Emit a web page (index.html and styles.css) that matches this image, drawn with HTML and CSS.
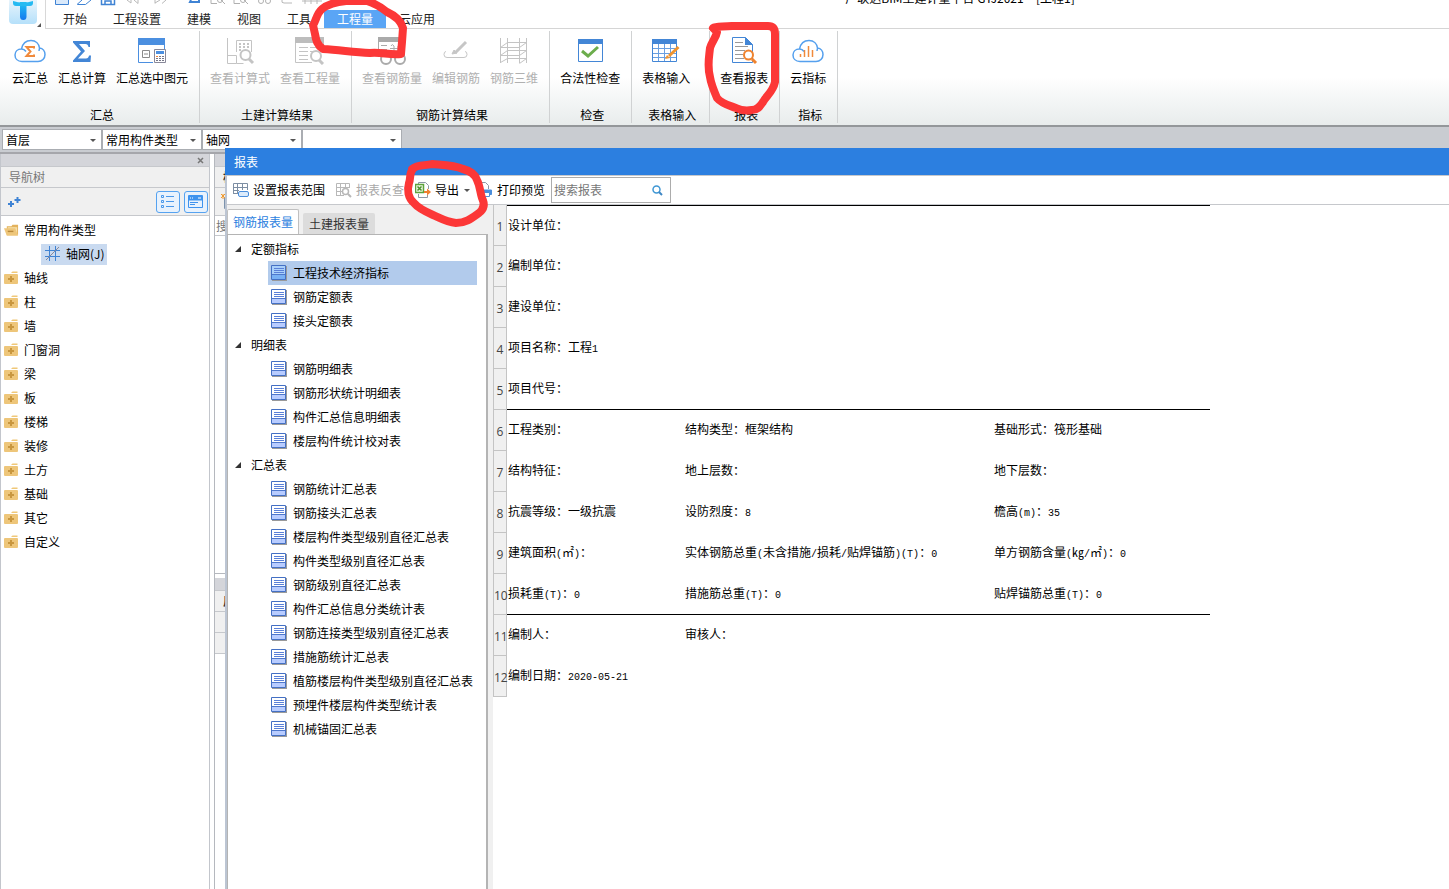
FILE: index.html
```
<!DOCTYPE html>
<html lang="zh-CN">
<head>
<meta charset="utf-8">
<title>广联达BIM土建计量平台 GTJ2021 - [工程1]</title>
<link rel="stylesheet" href="styles.css">
</head>
<body>
<svg class="defs" aria-hidden="true">
  <symbol id="doc" viewBox="0 0 16 16">
    <path d="M1 1h15v15H1z" fill="#9a9a9a"/>
    <path class="paper" d="M.5.5h14v14H.5z" stroke="#4470c4"/>
    <path class="foot" d="M1 10h13v4H1z"/>
    <path d="M3 3.500h10M3 5.500h10M3 7.500h10" stroke="#5a80d8"/>
    <path d="M1 9.500h13" stroke="#4f78cc"/>
  </symbol>
  <symbol id="folder" viewBox="0 0 15 14">
    <path d="M7 2 8.500.5h5V2z" fill="#f0c878"/>
    <rect y="3" width="14" height="10" rx="1" fill="#eec67a"/>
    <path d="M7 5v6M4 8h6" stroke="#c9973f" stroke-width="2"/>
  </symbol>
  <symbol id="folder-open" viewBox="0 0 16 14">
    <path d="M3 3h5l1-1.500h6V12H3z" fill="#e3b25c"/>
    <path d="M4 4h10v7H4z" fill="#f6dfa8"/>
    <path d="M0 5h12l3 8H3z" fill="#eec67a"/>
    <path d="M4 8.500h6" stroke="#b98a3c" stroke-width="1.500"/>
  </symbol>
  <symbol id="cloud" viewBox="0 0 32 24">
    <path d="M8 22.500C3.500 22.500 1 19.500 1 16c0-3.500 2.500-6 6.500-6C8.500 5 12 1.500 17 1.500c5 0 8 3.500 8.500 7.500 3.500.5 5.500 3.500 5.500 6.500 0 4-3 7-7 7zM7.500 10c2 0 3.500 1 4.500 2.500M25.500 9l-.5 3" fill="none" stroke="#55a0ee" stroke-width="1.500"/>
  </symbol>
</svg>

<header class="top">
  <button class="logo" aria-label="主菜单">
    <svg width="28" height="24" viewBox="0 0 28 24"><defs><linearGradient id="lg" x2="0" y2="1"><stop stop-color="#e8f4fc"/><stop offset="1" stop-color="#b5e0fa"/></linearGradient><linearGradient id="tg" x2="0" y2="1"><stop stop-color="#20c4f4"/><stop offset="1" stop-color="#1478ee"/></linearGradient></defs><path d="M0 0h28v20q0 4-4 4H4q-4 0-4-4z" fill="url(#lg)"/><path d="M11 2h6.500v14.500q0 3.500-3.200 3.500T11 16.500z" fill="url(#tg)"/><path d="M4 1q10 3 20 0v2q0 3-3 3H7q-3 0-3-3z" fill="#25baf2"/></svg>
    <svg class="corner" width="4" height="4"><path d="M4 0v4H0z" fill="#555"/></svg>
  </button>
  <div class="top-main">
    <div class="quick">
      <svg width="280" height="6" viewBox="0 0 280 6" fill="none" stroke="#3f83d4">
        <path d="M.5 0v4.500h13V0" fill="#d9e9fb"/><path d="M22 4.500 27 0M22.500 4.500h8L36 0"/><path d="M46.500 0v4.500h13V0M50 4V1h6v3" stroke-width="1.500"/>
        <path d="m72 0 4 3V0m3 0 4 3.500V0M100 3.500V0m0 3 5-3m2 3.500L111 0" stroke="#b8b8b8"/>
        <path d="m136 0-1 2h9V0" stroke-width="2"/>
        <path d="M156 0v3.500h6M166 0l4 4M179 0v3.500h6M189 0l4 4" stroke="#b0b0b0"/><circle cx="165" cy="0" r="2.500" stroke="#b0b0b0"/><circle cx="188" cy="0" r="2.500" stroke="#b0b0b0"/><circle cx="206" cy="1" r="2.500" stroke="#b0b0b0"/><circle cx="213" cy="1" r="2.500" stroke="#b0b0b0"/><path d="M227 0q-1 3 2 3h8M247 1h20M250 0v4m6-4v4m6-4v4" stroke="#b8b8b8"/>
      </svg>
      <div class="title">广联达BIM土建计量平台 GTJ2021 - &nbsp;[工程1]</div>
    </div>
    <nav class="tabs">
      <button>开始</button><button>工程设置</button><button>建模</button><button>视图</button><button>工具</button><button class="active">工程量</button><button>云应用</button>
    </nav>
  </div>
</header>

<section class="ribbon">
  <div class="group first">
    <div class="tools">
      <button><svg width="32" height="28" viewBox="0 0 32 28"><use href="#cloud" y="2" width="32" height="24"/><path d="M20 11.500V10h-7.500l4 4.500-4 4.500H20v-1.500" fill="none" stroke="#f08a3c" stroke-width="2"/></svg>云汇总</button>
      <button><svg width="32" height="28" viewBox="0 0 32 28"><path d="M7 4h17v6h-1.500q-.5-3-3-3H13L19 14 12 21.500h8q2.500 0 3-3H25L24.500 25H7v-1.500l8-9L7 5.500z" fill="#4386d6"/></svg>汇总计算</button>
      <button><svg width="32" height="28" viewBox="0 0 32 28" fill="none"><path d="M2.500 3v22.500H17M28.500 3v10" stroke="#4b8fe0"/><path d="M2 1h27v7H2z" fill="#4b8fe0"/><path d="M6.500 13.500h7v7h-7zM8 17h4" stroke="#8b8b8b"/><path d="M18.500 12.500h11v13h-11z" fill="#fff" stroke="#889"/><path d="M20 14h8v3h-8z" fill="#4b8fe0"/><path d="M20 19.500h2m1 0h2m1 0h2m-8 2h2m1 0h2m1 0h2m-8 2h2m1 0h2m1 0h2" stroke="#778"/><path d="M20 19.500h2" stroke="#f08030"/></svg>汇总选中图元</button>
    </div>
    <div class="caption">汇总</div>
  </div>
  <div class="group">
    <div class="tools">
      <button disabled><svg width="32" height="28" viewBox="0 0 32 28" fill="none" stroke="#c4c4c4"><path d="M3.500 1v25.500h9v-8h-9M12.500 26.500h7M12.500 15V3.500h15V15"/><path d="M15 7h2m2 0h2m2 0h2m-10 3h2m2 0h2m2 0h2m-10 3h2" stroke-width="2"/><circle cx="21.500" cy="18" r="5" stroke-width="2" fill="#fff"/><path d="m25 22 4 4" stroke-width="3"/></svg>查看计算式</button>
      <button disabled><svg width="32" height="28" viewBox="0 0 32 28" fill="none" stroke="#c4c4c4"><path d="M1.500 3v22.500H18M29.500 3v11M5 10.500h9m2 0h8m-19 4h9m-9 4h9m-9 4h9m2-8h3"/><path d="M1 0h29v6H1z" fill="#bdbdbd" stroke="none"/><circle cx="22" cy="19" r="5" stroke-width="2" fill="#fff"/><path d="m25 23 4 4" stroke-width="3"/></svg>查看工程量</button>
    </div>
    <div class="caption">土建计算结果</div>
  </div>
  <div class="group">
    <div class="tools">
      <button disabled><svg width="32" height="28" viewBox="0 0 32 28" fill="none" stroke="#aaa"><path d="M2.500 3v16M28.500 3v16M5 8.500h6m-6 4h6m-6 4h6M14 11.500h12M14 15.500h12M18 18V9q-2-3-3 0m7 9V9q2-3 3 0"/><path d="M2 0h27v5H2z" fill="#aaa" stroke="none"/><circle cx="10" cy="22" r="5" stroke-width="2" fill="#fff"/><circle cx="24" cy="22" r="5" stroke-width="2" fill="#fff"/><path d="M14 21q3-2 5 0"/></svg>查看钢筋量</button>
      <button disabled><svg width="32" height="28" viewBox="0 0 32 28" fill="none" stroke="#c6c6c6"><path d="M6 14.500q-2 0-2 3t3 3h17q3 0 3-3t-2-3"/><path d="m15 16 11-11" stroke-width="3"/><path d="m12 17 2-4 3 3z" fill="#c6c6c6"/></svg>编辑钢筋</button>
      <button disabled><svg width="32" height="28" viewBox="0 0 32 28" fill="none" stroke="#c4c4c4"><path d="M2.500 1v25M9.500 1v25M21.500 1v25M28.500 1v25M9 5.500h20M2 10.500h20M9 13.500h20M2 18.500h20M9 21.500h20M2.500 10.500l7-5m-7 13 7-5M21.500 10.500l7-5m-7 13 7-5m-7 13 7-5M2.500 25.500l7-4"/></svg>钢筋三维</button>
    </div>
    <div class="caption">钢筋计算结果</div>
  </div>
  <div class="group">
    <div class="tools">
      <button><svg width="32" height="28" viewBox="0 0 32 28" fill="none"><path d="M4.500 3h24v21.500h-24z" stroke="#4386d6"/><path d="M4 2h25v5H4z" fill="#4386d6"/><path d="m8 14 6 5L24 10" stroke="#6cad4c" stroke-width="3"/></svg>合法性检查</button>
    </div>
    <div class="caption">检查</div>
  </div>
  <div class="group wide">
    <div class="tools">
      <button><svg width="32" height="28" viewBox="0 0 32 28" fill="none"><path d="M2.500 3h24v21.500h-24z" stroke="#4386d6"/><path d="M2 2h25v5H2z" fill="#4386d6"/><path d="M3 11.500h23M3 16.500h23M3 20.500h23M8.500 7v17M14.500 7v17M20.500 7v17" stroke="#6a9fe0"/><path d="m19 19 9.500-9" stroke="#f0942e" stroke-width="3"/><path d="m15 22 2-4 3 3z" fill="#f0942e"/></svg>表格输入</button>
    </div>
    <div class="caption">表格输入</div>
  </div>
  <div class="group">
    <div class="tools">
      <button><svg width="32" height="28" viewBox="0 0 32 28" fill="none"><path d="M4.500.5h13l7 7v18h-20z" stroke="#4386d6" fill="#fff"/><path d="M17 0v8h8z" fill="#4386d6"/><path d="M7 5.500h8M7 9.500h13M7 13.500h10M7 17.500h8M7 21.500h9" stroke="#999"/><circle cx="20.500" cy="18" r="4.500" fill="#fff" stroke="#f0832e" stroke-width="2"/><path d="m24 22 4 4" stroke="#f0832e" stroke-width="3"/></svg>查看报表</button>
    </div>
    <div class="caption">报表</div>
  </div>
  <div class="group">
    <div class="tools">
      <button><svg width="32" height="28" viewBox="0 0 32 28"><use href="#cloud" y="2" width="32" height="24"/><path d="M12.500 13v7M16.500 9v11M20.500 13v7M8.500 17v3" stroke="#f08a3c" stroke-width="1.500"/></svg>云指标</button>
    </div>
    <div class="caption">指标</div>
  </div>
</section>

<div class="selectors">
  <label class="combo"><select aria-label="楼层"><option>首层</option></select></label>
  <label class="combo"><select aria-label="构件分类"><option>常用构件类型</option></select></label>
  <label class="combo"><select aria-label="构件类型"><option>轴网</option></select></label>
  <label class="combo"><select aria-label="构件"><option></option></select></label>
</div>

<main class="workspace">
  <aside class="nav">
    <div class="strip"><button aria-label="关闭"><svg width="7" height="7"><path d="m1 1 5 5m0-5-5 5" stroke="#777" stroke-width="1.500"/></svg></button></div>
    <h2 class="heading">导航树</h2>
    <div class="nav-tools">
      <svg width="13" height="11" viewBox="0 0 13 11"><path d="M3 5v6M0 8h6M9.500 1v6M6.500 4h6" stroke="#3f83d4" stroke-width="2"/></svg>
      <span class="spacer"></span>
      <button aria-label="列表"><svg width="14" height="14" fill="none" stroke="#4a98ea"><path d="M.5.5h2v2h-2zM.5 5.500h2v2h-2zM.5 10.500h2v2h-2zM5 1.500h8M5 6.500h8M5 11.500h8"/></svg></button>
      <button aria-label="面板"><svg width="16" height="14" fill="none" stroke="#3f93ee"><path d="M.5.5h14v12H.5z"/><path d="M1 1h13v4H1z" fill="#3f93ee"/><path d="M2 7.500h8M2 9.500h5"/><path d="M2 3h1m1 0h1m5 0h3" stroke="#fff"/></svg></button>
    </div>
    <ul class="nav-tree">
      <li><svg class="open"><use href="#folder-open"/></svg>常用构件类型</li>
      <li class="leaf"><button><svg width="15" height="16" fill="none" stroke="#3f83d4"><path d="M4.500 0v15M10.500 0v15M0 4.500h15M0 10.500h15"/><path d="M1 14 14 1" stroke="#889"/></svg>轴网(J)</button></li>
      <li><svg><use href="#folder"/></svg>轴线</li>
      <li><svg><use href="#folder"/></svg>柱</li>
      <li><svg><use href="#folder"/></svg>墙</li>
      <li><svg><use href="#folder"/></svg>门窗洞</li>
      <li><svg><use href="#folder"/></svg>梁</li>
      <li><svg><use href="#folder"/></svg>板</li>
      <li><svg><use href="#folder"/></svg>楼梯</li>
      <li><svg><use href="#folder"/></svg>装修</li>
      <li><svg><use href="#folder"/></svg>土方</li>
      <li><svg><use href="#folder"/></svg>基础</li>
      <li><svg><use href="#folder"/></svg>其它</li>
      <li><svg><use href="#folder"/></svg>自定义</li>
    </ul>
  </aside>
  <aside class="parts">
    <div class="strip"></div>
    <h2 class="heading">构</h2>
    <div class="parts-tools"><svg width="14" height="16" fill="none"><path d="M3.500 4v10.500H14" stroke="#7c93ad"/><path d="M0 0l4 4m0-4L0 4M2 0v5" stroke="#f09a2e"/></svg></div>
    <div class="find">搜</div>
    <div class="list"></div>
    <div class="strip lower"></div>
    <h2 class="heading">属</h2>
    <div class="cell"></div>
    <div class="cell"></div>
  </aside>
</main>

<section class="dialog" role="dialog" aria-label="报表">
  <h1>报表</h1>
  <div class="bar">
    <button><svg width="16" height="16" fill="none" stroke="#7d8ea3"><path d="M.5 12V1.500h14V8M0 5.500h15M0 8.500h6M4.500 1v11M9.500 1v7M0 11.500h5"/><rect x="5.500" y="9.500" width="10" height="5" rx="1.500" fill="#dcebfb" stroke="#4a8edc"/></svg>设置报表范围</button>
    <button disabled><svg width="16" height="16" fill="none" stroke="#b8b8b8"><path d="M.5 13V1.500h13V6M0 5.500h14M0 9.500h6M4.500 1v12M9.500 1v5M0 13.500h8"/><circle cx="9.500" cy="9.500" r="3" fill="#fff" stroke-width="1.500"/><path d="m12 12 3 3" stroke-width="2"/></svg>报表反查</button>
    <button class="export"><svg width="16" height="16" fill="none"><path d="M3.500 2V.5h7l3 3V7M3.500 12v3.500h9V13" stroke="#8d98a5"/><path d="M.5 2.500h8v8h-8z" fill="#eef8e4" stroke="#5ea23c" stroke-width="1.500"/><path d="m2.500 4.500 4 4m0-4-4 4" stroke="#4a8f2c" stroke-width="1.500"/><path d="M9 10h4" stroke="#f08030" stroke-width="2"/><path d="m12 6.500 4 3.500-4 3.500z" fill="#f08030"/></svg>导出<span class="caret"></span></button>
    <button class="print"><svg width="16" height="16" fill="none"><path d="M2.500 13V.5h6l3 3V7" stroke="#8d98a5"/><path d="M5 8h9.500v4.500H5z" fill="#4a8edc" stroke="#4a8edc"/><path d="M6.500 10.500h6v4h-6z" fill="#fff" stroke="#4a8edc"/></svg>打印预览</button>
    <label class="search"><input type="text" placeholder="搜索报表" aria-label="搜索报表"><svg width="11" height="11" fill="none"><circle cx="4.500" cy="4.500" r="3.500" stroke="#3f97d4" stroke-width="1.500"/><path d="m7 7 3 3" stroke="#3f87c4" stroke-width="2"/></svg></label>
  </div>
  <div class="content">
    <div class="side">
      <div class="side-tabs"><button class="on">钢筋报表量</button><button>土建报表量</button></div>
      <div class="reports">
        <h3><i></i>定额指标</h3>
        <ul>
          <li class="picked"><svg><use href="#doc"/></svg>工程技术经济指标</li>
          <li><svg><use href="#doc"/></svg>钢筋定额表</li>
          <li><svg><use href="#doc"/></svg>接头定额表</li>
        </ul>
        <h3><i></i>明细表</h3>
        <ul>
          <li><svg><use href="#doc"/></svg>钢筋明细表</li>
          <li><svg><use href="#doc"/></svg>钢筋形状统计明细表</li>
          <li><svg><use href="#doc"/></svg>构件汇总信息明细表</li>
          <li><svg><use href="#doc"/></svg>楼层构件统计校对表</li>
        </ul>
        <h3><i></i>汇总表</h3>
        <ul>
          <li><svg><use href="#doc"/></svg>钢筋统计汇总表</li>
          <li><svg><use href="#doc"/></svg>钢筋接头汇总表</li>
          <li><svg><use href="#doc"/></svg>楼层构件类型级别直径汇总表</li>
          <li><svg><use href="#doc"/></svg>构件类型级别直径汇总表</li>
          <li><svg><use href="#doc"/></svg>钢筋级别直径汇总表</li>
          <li><svg><use href="#doc"/></svg>构件汇总信息分类统计表</li>
          <li><svg><use href="#doc"/></svg>钢筋连接类型级别直径汇总表</li>
          <li><svg><use href="#doc"/></svg>措施筋统计汇总表</li>
          <li><svg><use href="#doc"/></svg>植筋楼层构件类型级别直径汇总表</li>
          <li><svg><use href="#doc"/></svg>预埋件楼层构件类型统计表</li>
          <li><svg><use href="#doc"/></svg>机械锚固汇总表</li>
        </ul>
      </div>
    </div>
    <div class="sheet">
      <table>
        <colgroup><col class="c0"><col class="c1"><col class="c2"><col class="c3"></colgroup>
        <tbody>
        <tr class="rule-top"><th>1</th><td>设计单位：</td><td></td><td></td></tr>
        <tr><th>2</th><td>编制单位：</td><td></td><td></td></tr>
        <tr><th>3</th><td>建设单位：</td><td></td><td></td></tr>
        <tr><th>4</th><td>项目名称：工程<b>1</b></td><td></td><td></td></tr>
        <tr class="rule"><th>5</th><td>项目代号：</td><td></td><td></td></tr>
        <tr><th>6</th><td>工程类别：</td><td>结构类型：框架结构</td><td>基础形式：筏形基础</td></tr>
        <tr><th>7</th><td>结构特征：</td><td>地上层数：</td><td>地下层数：</td></tr>
        <tr><th>8</th><td>抗震等级：一级抗震</td><td>设防烈度：<b>8</b></td><td>檐高<b>(m)</b>：<b>35</b></td></tr>
        <tr><th>9</th><td>建筑面积<b>(</b>㎡<b>)</b>：</td><td>实体钢筋总重<b>(</b>未含措施<b>/</b>损耗<b>/</b>贴焊锚筋<b>)(T)</b>：<b>0</b></td><td>单方钢筋含量<b>(</b>㎏<b>/</b>㎡<b>)</b>：<b>0</b></td></tr>
        <tr class="rule"><th>10</th><td>损耗重<b>(T)</b>：<b>0</b></td><td>措施筋总重<b>(T)</b>：<b>0</b></td><td>贴焊锚筋总重<b>(T)</b>：<b>0</b></td></tr>
        <tr><th>11</th><td>编制人：</td><td>审核人：</td><td></td></tr>
        <tr><th>12</th><td>编制日期：<b>2020-05-21</b></td><td></td><td></td></tr>
        </tbody>
      </table>
    </div>
  </div>
</section>

<svg class="marks" width="800" height="240" viewBox="0 0 800 240" aria-hidden="true">
  <path d="M313 25C316 22 316 14 322 9C328 4 336 2 346 1L367 1C377 4 382 8 387 12C396 16 401 21 403 28L402 42L401 54C388 55 382 52 370 53C352 52 340 50 323 49C317 45 316 40 315 34Z"/>
  <path d="M717 32L713 28C716 26 722 27 732 26L768 26C773 26 775 29 775 34L775 82C773 92 766 96 763 102C760 106 758 110 752 110C746 111 740 110 736 108C728 105 722 104 717 98C714 91 711 84 710 77C707 66 709 58 710 48C712 41 716 38 717 32Z"/>
  <path d="M412 169C418 164 425 166 432 164C444 165 454 165 463 169C471 171 475 174 477 180C480 186 480 192 482 198C485 204 484 209 479 213C472 218 466 223 456 223C446 222 440 218 433 215C424 211 418 208 414 203C408 198 407 190 409 183C411 178 409 173 413 169Z"/>
</svg>
</body>
</html>
```
FILE: styles.css
```
* { box-sizing: border-box; }
body {
  margin: 0;
  height: 100vh;
  position: relative;
  overflow: hidden;
  display: flex;
  flex-direction: column;
  font: 12px/16px "Noto Sans CJK SC", sans-serif;
  color: #000;
  background: #fff;
}
button, select, input { font: inherit; color: inherit; }
button { border: 0; padding: 0; background: none; white-space: nowrap; }
h1, h2, h3, ul { margin: 0; padding: 0; font-size: 12px; font-weight: 400; list-style: none; }
svg { display: block; flex: none; }
.defs { position: absolute; width: 0; height: 0; }
.paper { fill: var(--paper, #fff); }
.foot { fill: var(--foot, #b8ccff); }

.top { display: flex; height: 29px; flex: none; }
.logo { display: flex; align-items: flex-start; width: 46px; padding-left: 9px; border-right: 1px solid #d8d8d8; }
.corner { align-self: flex-end; margin-bottom: 2px; }
.top-main { flex: 1; border-bottom: 1px solid #d5d5d5; }
.quick { display: flex; align-items: flex-end; height: 10px; padding: 0 0 4px 9px; overflow: hidden; }
.title { flex: 1; padding-left: 136px; text-align: center; white-space: nowrap; }
.tabs { display: flex; padding-left: 4px; }
.tabs button { height: 18px; padding: 0 13px; color: #222; line-height: 18px; }
.tabs .active { background: #5aa5f5; color: #fff; }

.ribbon { display: flex; flex: none; height: 98px; padding: 2px 0; border-bottom: 2px solid #94979a; background: linear-gradient(#fff 50%, #e8ecec); }
.group { display: flex; flex-direction: column; justify-content: space-between; padding: 6px 11px 0 10px; border-right: 1px solid #d0d2d3; }
.first { padding-left: 12px; }
.wide { min-width: 78px; }
.tools { display: flex; gap: 10px; }
.tools button { display: flex; flex-direction: column; align-items: center; gap: 5px; }
.tools button:disabled { color: #b0b0b0; }
.caption { padding-left: 4px; text-align: center; }

.selectors { display: flex; flex: none; height: 27px; padding: 2px; background: #c9ccd1; border-bottom: 2px solid #a5a6ab; }
.combo { position: relative; display: flex; width: 100px; border: 1px solid #aaadb2; background: #fff; }
.combo select { appearance: none; width: 100%; border: 0; padding: 0 3px; background: none; outline: 0; }
.combo::after { content: ""; position: absolute; right: 5px; top: 9px; border: 3px solid transparent; border-top-color: #555; border-bottom: 0; pointer-events: none; }

.workspace { display: flex; gap: 4px; flex: 1; min-height: 0; }
.nav { width: 210px; border: 1px solid #c3c6cc; border-width: 0 1px; }
.strip { display: flex; justify-content: flex-end; align-items: center; height: 12px; padding-right: 5px; background: #d4d5da; }
.heading { height: 22px; padding-left: 8px; line-height: 20px; background: #f0f0f0; border: 1px solid #c6c8cc; border-width: 1px 0; color: #777; }
.nav-tools { display: flex; align-items: center; gap: 4px; height: 28px; padding: 0 1px 0 7px; background: #f0f0f0; border-bottom: 1px solid #c6c8cc; }
.spacer { flex: 1; }
.nav-tools button { display: grid; place-items: center; width: 24px; height: 22px; border: 1px solid #55a2f0; border-radius: 3px; background: #e8f2fd; }
.nav-tree { padding-top: 2px; }
.nav-tree li { display: flex; align-items: center; height: 24px; padding-left: 3px; gap: 5px; }
.nav-tree li > svg { width: 15px; height: 14px; }
.nav-tree .leaf { padding-left: 40px; }
.leaf button { display: flex; align-items: center; gap: 6px; height: 21px; padding: 0 2px 0 4px; background: #c9daf0; }
.parts { flex: 1; display: flex; flex-direction: column; border-left: 1px solid #b5b8be; }
.parts .heading { color: #333; font-weight: 700; }
.parts-tools { height: 28px; padding: 6px; background: #f0f0f0; border-bottom: 1px solid #c6c8cc; }
.find { height: 20px; padding-left: 1px; line-height: 20px; color: #777; border-bottom: 1px solid #c6c8cc; }
.list { height: 338px; border-bottom: 1px solid #b5b8be; }
.lower { margin-top: 4px; }
.cell { height: 21px; background: #f0f0f0; border-bottom: 1px solid #c6c8cc; }

.dialog { position: absolute; left: 225px; right: 0; top: 148px; bottom: 0; display: flex; flex-direction: column; background: #fff; }
.dialog h1 { flex: none; height: 27px; padding-left: 9px; line-height: 27px; color: #fff; background: #2c7fe0; }
.bar { display: flex; align-items: center; flex: none; height: 30px; padding-left: 6px; border: 1px solid #c6c8cc; border-width: 1px 0; border-left: 2px solid #bcc5d3; }
.bar button { display: flex; align-items: center; gap: 4px; margin-right: 11px; }
.bar button:disabled { color: #a8a8a8; }
.bar .export { margin-right: 7px; }
.bar .print { margin-right: 6px; }
.caret { border: 3px solid transparent; border-top-color: #555; border-bottom: 0; margin-left: 1px; }
.search { display: flex; align-items: center; width: 120px; height: 26px; padding-right: 7px; border: 1px solid #acacac; }
.search input { flex: 1; min-width: 0; border: 0; outline: 0; padding: 0 2px; background: none; }
.search input::placeholder { color: #777; opacity: 1; }
.content { display: flex; flex: 1; min-height: 0; }
.side { display: flex; flex-direction: column; width: 268px; padding: 4px 5px 0 0; background: #f0f0f0; border-left: 2px solid #bcc5d3; }
.side-tabs { display: flex; align-items: flex-end; gap: 4px; }
.side-tabs button { height: 21px; padding: 0 6px; background: #dcdcdc; color: #333; border-radius: 2px 2px 0 0; }
.side-tabs .on { height: 25px; padding: 0 5px; border: 1px solid #c0c0c0; border-bottom: 0; background: #fff; color: #2c7fe0; }
.reports { flex: 1; padding: 2px 9px 0 0; border: 1px solid #b4b4b4; border-width: 1px 2px 0 1px; background: #fff; overflow: hidden; }
.reports h3, .reports li { display: flex; align-items: center; height: 24px; }
.reports h3 { padding-left: 7px; gap: 9px; }
.reports i { width: 0; height: 0; border-left: 6px solid transparent; border-bottom: 6px solid #333; margin-right: 1px; }
.reports ul { padding-left: 40px; }
.reports li { gap: 6px; padding-left: 3px; white-space: nowrap; }
.reports svg { width: 16px; height: 16px; }
.picked { background: #b2cbec; --paper: #a9d0fa; --foot: #78b0f4; }
.sheet { flex: 1; overflow: hidden; }
.sheet table { border-collapse: separate; border-spacing: 0; table-layout: fixed; width: 717px; }
.c0 { width: 14px; }
.c1 { width: 177px; }
.c2 { width: 309px; }
.sheet th { height: 41px; padding: 3px 0 0; font: 400 12px/16px "Open Sans", sans-serif; color: #444; background: #f0f0f0; border: 1px solid #c4c4c4; border-width: 0 1px 1px; }
.sheet td { padding: 0 0 3px 1px; white-space: nowrap; }
.sheet td b { font: 400 10px/10px "Liberation Mono", monospace; }
.rule td { border-bottom: 1px solid #000; }
.rule-top td { border-top: 1px solid #000; }

.marks { position: absolute; left: 0; top: 0; fill: none; stroke: #fc3737; stroke-width: 8px; stroke-linejoin: round; pointer-events: none; }
```
